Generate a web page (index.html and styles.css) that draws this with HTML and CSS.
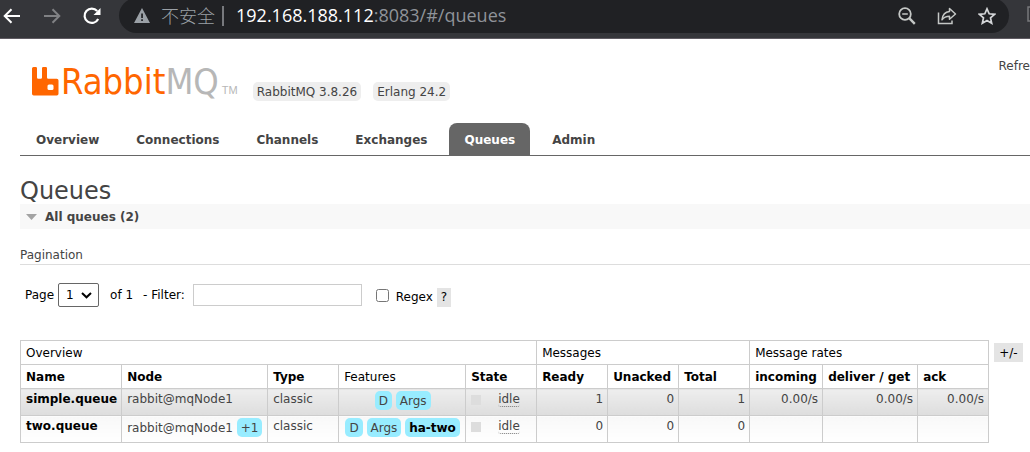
FILE: index.html
```html
<!DOCTYPE html>
<html lang="en">
<head>
<meta charset="utf-8">
<title>RabbitMQ Management</title>
<link rel="stylesheet" href="styles.css">
</head>
<body>
<div class="browser-bar">
  <button class="nav-btn" aria-label="Back"><svg width="18" height="16" viewBox="0 0 18 16"><path d="M17 8H2M8.500 1.200 1.700 8l6.800 6.800" fill="none" stroke="#fff" stroke-width="2"/></svg></button>
  <button class="nav-btn" aria-label="Forward"><svg width="18" height="16" viewBox="0 0 18 16"><path d="M1 8h15M9.500 1.200 16.300 8l-6.800 6.800" fill="none" stroke="#808184" stroke-width="2"/></svg></button>
  <button class="nav-btn" aria-label="Reload"><svg width="18" height="18" viewBox="0 0 18 18"><path d="M15.200 12A7.200 7.200 0 1 1 14.200 4" fill="none" stroke="#fff" stroke-width="2.200"/><path d="M17.500 1v7h-7z" fill="#fff"/></svg></button>
  <div class="omnibox">
    <svg class="warn" width="16" height="15" viewBox="0 0 16 15"><path d="M8 0 16 15H0z" fill="#9aa0a6"/><path d="M7.200 5.500h1.700v4.500H7.200zM7.200 11.200h1.700v1.700H7.200z" fill="#202124"/></svg>
    <span class="insecure" lang="zh">不安全</span>
    <span class="divider"></span>
    <span class="url"><b>192.168.188.112</b>:8083/#/queues</span>
    <span class="omni-actions">
      <button aria-label="Zoom"><svg width="18" height="18" viewBox="0 0 18 18"><circle cx="7" cy="7" r="5.800" fill="none" stroke="#c4c7c5" stroke-width="1.800"/><path d="M4.200 7h5.600" stroke="#c4c7c5" stroke-width="1.500"/><path d="m11.200 11.200 5.600 5.600" stroke="#c4c7c5" stroke-width="2.400"/></svg></button>
      <button aria-label="Share"><svg width="20" height="18" viewBox="0 0 20 18"><path d="M1.500 5.500v11h13.500v-3" fill="none" stroke="#c4c7c5" stroke-width="1.500"/><path d="M12.500 1.500 18.500 7l-6 5.200V9.200C9 9.200 6.800 10.300 5 12.800 5.500 8.500 8 5 12.500 4.600z" fill="none" stroke="#c4c7c5" stroke-width="1.500" stroke-linejoin="round"/></svg></button>
      <button aria-label="Bookmark"><svg width="18" height="18" viewBox="0 0 18 18"><path d="m9 1.800 2.200 5 5.400.5-4.100 3.600 1.200 5.300L9 13.400l-4.700 2.800 1.200-5.300L1.400 7.300l5.400-.5z" fill="none" stroke="#d4d6d8" stroke-width="1.700"/></svg></button>
    </span>
  </div>
  <svg class="ext" width="3" height="18" viewBox="0 0 3 18"><path d="M3 1H1v14h2" fill="none" stroke="#77787b" stroke-width="1.500"/></svg>
</div>

<header class="header">
  <div class="brand">
    <a class="logo" href="#/" aria-label="RabbitMQ">
      <svg width="27" height="29" viewBox="0 0 27 29"><path d="M1.500 0h2.300q1.200 0 1.200 1.200V10.500q0 1.300 1.300 1.300h2.400q1.300 0 1.300-1.300V1.200Q10 0 11.200 0h2.600Q15 0 15 1.200V10.500q0 1.300 1.300 1.300H24.800q1.700 0 1.700 1.700V26.800q0 1.700-1.700 1.700H1.700q-1.700 0-1.700-1.700V1.500Q0 0 1.500 0z" fill="#f60"/><rect x="15.500" y="17.500" width="6" height="5.500" rx="1.500" fill="#fff"/></svg>
      <span class="wordmark">Rabbit<span class="mq">MQ</span></span><span class="tm">TM</span>
    </a>
    <span class="version">RabbitMQ 3.8.26</span>
    <span class="version">Erlang 24.2</span>
  </div>
  <div class="status">Refre</div>
</header>

<nav class="tabs">
  <a href="#/">Overview</a>
  <a href="#/connections">Connections</a>
  <a href="#/channels">Channels</a>
  <a href="#/exchanges">Exchanges</a>
  <a href="#/queues" class="selected">Queues</a>
  <a href="#/users">Admin</a>
</nav>

<main class="main">
  <h1>Queues</h1>
  <h2><svg width="11" height="6" viewBox="0 0 11 6"><path d="M0 0h11L5.500 6z" fill="#a3a3a3"/></svg>All queues (2)</h2>
  <h3>Pagination</h3>
  <form class="filter">
    <label for="page">Page</label>
    <span class="select"><select id="page"><option>1</option></select><svg width="11" height="7" viewBox="0 0 11 7"><path d="m1 1 4.500 4.300L10 1" fill="none" stroke="#000" stroke-width="2"/></svg></span>
    <span class="of">of 1</span>
    <label for="filter" class="filter-label">- Filter:</label>
    <input type="text" id="filter">
    <input type="checkbox" id="regex">
    <label for="regex" class="regex-label">Regex</label>
    <button type="button" class="help">?</button>
  </form>
  <div class="table-wrap">
    <table class="list">
      <colgroup><col class="c-name"><col class="c-node"><col class="c-std"><col class="c-feat"><col class="c-std"><col class="c-std"><col class="c-std"><col class="c-std"><col class="c-in"><col class="c-get"><col class="c-std"></colgroup>
      <thead>
        <tr><th colspan="5">Overview</th><th colspan="3">Messages</th><th colspan="3">Message rates</th></tr>
        <tr class="names"><th>Name</th><th>Node</th><th>Type</th><th class="plain">Features</th><th>State</th><th>Ready</th><th>Unacked</th><th>Total</th><th>incoming</th><th>deliver / get</th><th>ack</th></tr>
      </thead>
      <tbody>
        <tr class="alt"><td><a href="#/queues/simple.queue">simple.queue</a></td><td>rabbit@mqNode1</td><td>classic</td><td class="c"><span class="tag">D</span> <span class="tag">Args</span></td><td><span class="state"><i></i><abbr>idle</abbr></span></td><td class="r">1</td><td class="r">0</td><td class="r">1</td><td class="r">0.00/s</td><td class="r">0.00/s</td><td class="r">0.00/s</td></tr>
        <tr><td><a href="#/queues/two.queue">two.queue</a></td><td>rabbit@mqNode1 <span class="tag">+1</span></td><td>classic</td><td class="c"><span class="tag">D</span> <span class="tag">Args</span> <a class="tag" href="#/policies/ha-two">ha-two</a></td><td><span class="state"><i></i><abbr>idle</abbr></span></td><td class="r">0</td><td class="r">0</td><td class="r">0</td><td></td><td></td><td></td></tr>
      </tbody>
    </table>
    <button type="button" class="columns">+/-</button>
  </div>
</main>
</body>
</html>
```
FILE: styles.css
```css
* { box-sizing: border-box; }
body {
  margin: 0;
  background: #fff;
  color: #444;
  font: 12px/18px "DejaVu Sans", Verdana, sans-serif;
  overflow-x: hidden;
}
button { font: inherit; border: 0; padding: 0; background: none; }
svg { display: block; flex: none; }

.browser-bar {
  display: flex;
  align-items: flex-start;
  height: 39px;
  padding-left: 3px;
  background: #35363a;
  border-bottom: 1px solid #5f5b62;
  overflow: hidden;
}
.nav-btn { display: flex; align-items: center; justify-content: center; width: 18px; height: 31px; margin-right: 22px; flex: none; }
.omnibox {
  flex: 1;
  display: flex;
  align-items: center;
  height: 35px;
  margin: -2px 18px 0 -4px;
  padding: 0 13px 0 15px;
  border-radius: 18px;
  background: #202124;
}
.insecure { margin-left: 11px; padding-bottom: 2px; font: 300 18px/24px "Noto Sans CJK SC", sans-serif; color: #9aa0a6; }
.divider { width: 2px; height: 20px; margin: 0 12px 0 7px; background: #77797d; }
.url { padding-bottom: 2px; font: 18px/24px "Open Sans", "Noto Sans", sans-serif; color: #8f9399; white-space: nowrap; }
.url b { font-weight: 400; color: #fff; }
.omni-actions { display: flex; gap: 21px; margin-left: auto; }
.ext { margin-top: 6px; }

.header { display: flex; justify-content: space-between; padding: 18px 0 0 32px; }
.brand { display: flex; align-items: flex-end; height: 44px; }
.logo { display: flex; align-items: flex-end; height: 44px; margin-right: 15px; padding-bottom: 5px; text-decoration: none; }
.wordmark { margin-left: 2px; font: 36px/28px "DejaVu Sans Condensed", "DejaVu Sans", sans-serif; color: #f60; }
.mq { color: #b7b7b7; }
.tm { margin-left: 3px; font: 11px/11px "Liberation Sans", sans-serif; color: #b7b7b7; }
.version { margin-right: 12px; padding: 1px 4px 0; border-radius: 5px; background: #eee; }

.tabs { display: flex; margin: 22px 0 0 20px; padding-left: 1px; border-bottom: 1px solid #666; }
.tabs a {
  margin-right: 7px;
  padding: 8px 15px 6px;
  border-radius: 8px 8px 0 0;
  color: #444;
  font-weight: 700;
  text-decoration: none;
}
.tabs .selected { background: #666; color: #fff; }

.main { padding-left: 20px; }
h1 { margin: 22px 0 0; font-size: 24px; line-height: 26px; font-weight: 400; }
h2 { display: flex; align-items: center; gap: 8px; margin: 0; padding: 4px 6px 3px; font-size: 12px; line-height: 18px; background: #f8f8f8; }
h3 { margin: 17px 0 0; font-size: 12px; font-weight: 400; border-bottom: 1px solid #ddd; }

.filter { display: flex; align-items: center; margin: 18px 0 0 5px; color: #000; }
.select { display: grid; align-items: center; margin: 0 11px 0 4px; }
.select select { grid-area: 1 / 1; width: 41px; height: 24px; padding: 0 7px; border: 1px solid #666; border-radius: 2px; background: #fff; color: #000; font: inherit; appearance: none; }
.select svg { grid-area: 1 / 1; justify-self: end; margin-right: 7px; pointer-events: none; }
.filter-label { margin: 0 8px 0 10px; }
.filter input[type="text"] { width: 169px; height: 22px; border: 1px solid #ccc; }
.filter input[type="checkbox"] { width: 13px; height: 13px; margin: 0 7px 0 14px; }
.regex-label { padding-top: 3px; }
.help, .columns { height: 19px; margin-left: 5px; padding: 0 4px; background: #e4e4e4; color: #000; }
.help { margin: 4px 0 0 4px; }

.table-wrap { display: flex; align-items: flex-start; margin-top: 33px; }
.columns { margin-top: 3px; padding: 0 5px; flex: none; }
.list { border-collapse: collapse; flex: none; }
.list th, .list td { border: 1px solid #ccc; text-align: left; vertical-align: top; white-space: nowrap; }
.list th { padding: 3px 4px 2px 5px; color: #000; font-weight: 400; }
.list .names th { font-weight: 700; }
.list .names .plain { font-weight: 400; }
.list td { height: 27px; padding: 2px 4px 2px 5px; line-height: 17px; background: linear-gradient(#f8f8f8, #fff); }
.list .alt td { background: linear-gradient(#eee, #ddd); }
.list td a { color: #000; font-weight: 700; text-decoration: none; }
.list .r { text-align: right; }
.list .c { text-align: center; }
.c-name { width: 101px; }
.c-node { width: 146px; }
.c-std { width: 71px; }
.c-feat { width: 127px; }
.c-in { width: 73px; }
.c-get { width: 95px; }
.tag { display: inline-block; padding: 1px 4px 0; border-radius: 5px; line-height: 18px; background: #98ecff; }
.state { display: flex; align-items: center; padding-top: 1px; }
.state i { width: 10px; height: 10px; margin-right: 17px; background: #ddd; }
.state abbr { height: 15px; line-height: 14px; border-bottom: 1px dotted #777; border-radius: 3px; text-decoration: none; }
```
